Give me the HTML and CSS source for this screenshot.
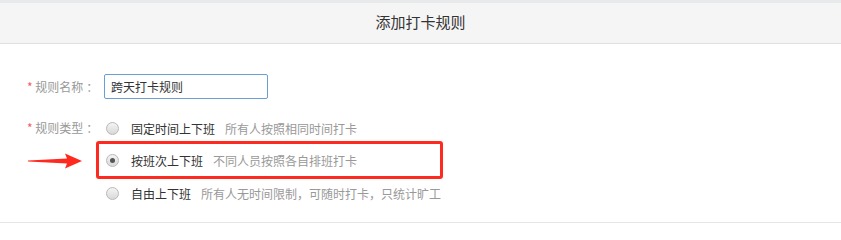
FILE: index.html
```
<!DOCTYPE html>
<html lang="zh">
<head>
<meta charset="utf-8">
<title>添加打卡规则</title>
<link rel="stylesheet" href="styles.css">
</head>
<body>
<div class="topbar"></div>
<div class="header">添加打卡规则</div>
<div class="form">
  <div class="row name-row">
    <div class="label"><span class="star">*</span> 规则名称<span class="colon">：</span></div>
    <div class="input">跨天打卡规则</div>
  </div>
  <div class="row type-row">
    <div class="label type-label"><span class="star">*</span> 规则类型<span class="colon">：</span></div>
    <div class="options">
      <div class="option">
        <span class="radio"></span>
        <span class="opt-title">固定时间上下班</span>
        <span class="opt-desc">所有人按照相同时间打卡</span>
      </div>
      <div class="option marked">
        <svg class="arrow" width="54" height="16" viewBox="0 0 54 16"><polygon points="0,7.6 39,5.6 37,0.5 54,8 37,15.5 39,10.4 0,8.4" fill="#ff2a1f"/></svg>
        <span class="highlight"></span>
        <span class="radio checked"></span>
        <span class="opt-title">按班次上下班</span>
        <span class="opt-desc">不同人员按照各自排班打卡</span>
      </div>
      <div class="option">
        <span class="radio"></span>
        <span class="opt-title">自由上下班</span>
        <span class="opt-desc">所有人无时间限制，可随时打卡，只统计旷工</span>
      </div>
    </div>
  </div>
</div>
</body>
</html>
```
FILE: styles.css
```
html, body {
  margin: 0;
  padding: 0;
  background: #fff;
  font-family: "Noto Sans CJK SC", "Noto Sans", sans-serif;
}
.topbar {
  height: 3px;
  background: #e8e9eb;
}
.header {
  height: 40px;
  line-height: 38px;
  background: #f5f5f5;
  border-bottom: 1px solid #e0e0e0;
  text-align: center;
  font-size: 15px;
  color: #333;
}
.form {
  padding: 30px 0 0 27px;
  height: 148px;
  border-bottom: 1px solid #e6e6e6;
}
.row {
  display: flex;
}
.name-row {
  align-items: center;
}
.label {
  width: 77px;
  font-size: 12px;
  color: #999;
  line-height: 20px;
  white-space: nowrap;
}
.colon {
  margin-left: 3px;
}
.star {
  color: #f06060;
}
.input {
  box-sizing: border-box;
  width: 164px;
  height: 25px;
  border: 1px solid #6a9fd4;
  border-radius: 2px;
  padding: 0 6px;
  font-size: 12px;
  line-height: 23px;
  color: #333;
}
.type-row {
  margin-top: 19px;
}
.options {
  display: flex;
  flex-direction: column;
  gap: 12.5px;
  margin-left: 2px;
}
.option {
  position: relative;
  display: flex;
  align-items: center;
  height: 20px;
  font-size: 12px;
}
.radio {
  box-sizing: border-box;
  width: 13px;
  height: 13px;
  border-radius: 50%;
  border: 1px solid #b8b8b8;
  background: linear-gradient(#f4f4f4, #d9d9d9);
  margin-right: 12px;
  display: flex;
  align-items: center;
  justify-content: center;
}
.radio.checked::after {
  content: "";
  width: 5px;
  height: 5px;
  border-radius: 50%;
  background: #555;
}
.opt-title {
  color: #333;
}
.opt-desc {
  color: #999;
  margin-left: 10px;
}
.highlight {
  position: absolute;
  left: -10px;
  top: -10px;
  width: 347px;
  height: 38px;
  box-sizing: border-box;
  border: 3px solid #ff2a1f;
  border-radius: 3px;
}
.arrow {
  position: absolute;
  left: -78px;
  top: 2px;
}
```
